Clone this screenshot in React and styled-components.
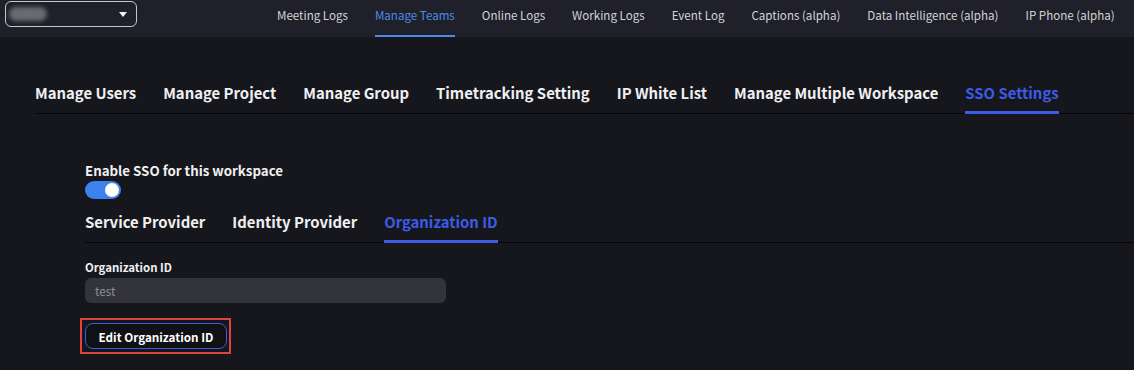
import styled, { createGlobalStyle } from 'styled-components'

const GlobalStyle = createGlobalStyle`
    body {
        margin: 0;
        background: #16171c;
        font-family: "Noto Sans CJK JP", "Noto Sans", sans-serif;
    }
`

const topLinks = [
    'Meeting Logs',
    'Manage Teams',
    'Online Logs',
    'Working Logs',
    'Event Log',
    'Captions (alpha)',
    'Data Intelligence (alpha)',
    'IP Phone (alpha)',
]

const mainTabs = [
    'Manage Users',
    'Manage Project',
    'Manage Group',
    'Timetracking Setting',
    'IP White List',
    'Manage Multiple Workspace',
    'SSO Settings',
]

const ssoTabs = ['Service Provider', 'Identity Provider', 'Organization ID']

const App = () => {
    return (
        <Page>
            <GlobalStyle />
            <Header>
                <WorkspaceSelect>
                    <Blur />
                    <Caret />
                </WorkspaceSelect>
                <TopNav>
                    {topLinks.map((link) => (
                        <TopLink key={link} $active={link === 'Manage Teams'}>
                            {link}
                        </TopLink>
                    ))}
                </TopNav>
            </Header>

            <Content>
                <TabBar>
                    {mainTabs.map((tab) => (
                        <Tab key={tab} $active={tab === 'SSO Settings'}>
                            {tab}
                        </Tab>
                    ))}
                </TabBar>

                <SsoPanel>
                    <FieldLabel $size="13.3px">Enable SSO for this workspace</FieldLabel>
                    <Toggle $on>
                        <Knob />
                    </Toggle>

                    <SubTabBar>
                        {ssoTabs.map((tab) => (
                            <Tab key={tab} $active={tab === 'Organization ID'}>
                                {tab}
                            </Tab>
                        ))}
                    </SubTabBar>

                    <FieldLabel $size="11.4px">Organization ID</FieldLabel>
                    <TextInput>test</TextInput>

                    <Highlight>
                        <OutlineButton>Edit Organization ID</OutlineButton>
                    </Highlight>
                </SsoPanel>
            </Content>
        </Page>
    )
}

export default App

const Page = styled.div`
    width: 1134px;
    height: 370px;
    overflow: hidden;
    background: #16171c;
    color: #e8e8ea;
`

const Header = styled.div`
    height: 37px;
    background: #1f2029;
    display: flex;
    align-items: flex-start;
    padding-left: 5px;
`

const WorkspaceSelect = styled.div`
    flex-shrink: 0;
    margin-top: 1px;
    width: 132px;
    height: 26px;
    border: 1.5px solid #c8c8cc;
    border-radius: 6px;
    display: flex;
    align-items: center;
    justify-content: space-between;
    padding: 0 9px 0 3px;
    box-sizing: border-box;
`

const Blur = styled.div`
    width: 38px;
    height: 14px;
    border-radius: 7px;
    background: #6a6b70;
    filter: blur(2px);
`

const Caret = styled.div`
    width: 0;
    height: 0;
    border-left: 4px solid transparent;
    border-right: 4px solid transparent;
    border-top: 5px solid #f2f2f2;
`

const TopNav = styled.nav`
    display: flex;
    margin-left: 140px;
    gap: 27px;
`

const TopLink = styled.div`
    font-size: 11.58px;
    height: 37px;
    line-height: 30px;
    box-sizing: border-box;
    color: ${(p) => (p.$active ? '#4a8ce8' : '#d4d4d8')};
    border-bottom: 2px solid ${(p) => (p.$active ? '#4a8ce8' : 'transparent')};
    white-space: nowrap;
`

const Content = styled.div`
    padding-top: 39px;
`

const TabBar = styled.div`
    margin-left: 35px;
    display: flex;
    gap: 27px;
    border-bottom: 1px solid #050506;
`

const Tab = styled.div`
    font-size: 14.88px;
    font-weight: 600;
    height: 38px;
    line-height: 34px;
    box-sizing: border-box;
    white-space: nowrap;
    color: ${(p) => (p.$active ? '#3d5be6' : '#f0f0f2')};
    border-bottom: 3px solid ${(p) => (p.$active ? '#3d5be6' : 'transparent')};
    margin-bottom: -1px;
`

const SsoPanel = styled.div`
    padding-left: 85px;
    padding-top: 48px;
    display: flex;
    flex-direction: column;
    align-items: flex-start;
`

const FieldLabel = styled.div`
    font-size: ${(p) => p.$size};
    font-weight: 600;
    line-height: 18px;
    color: #f0f0f2;
`

const Toggle = styled.div`
    margin-top: 1px;
    width: 36px;
    height: 18px;
    border-radius: 9px;
    background: ${(p) => (p.$on ? '#3b82f0' : '#555')};
    display: flex;
    align-items: center;
    justify-content: ${(p) => (p.$on ? 'flex-end' : 'flex-start')};
    padding: 0 2px;
    box-sizing: border-box;
`

const Knob = styled.div`
    width: 14px;
    height: 14px;
    border-radius: 50%;
    background: #ffffff;
`

const SubTabBar = styled.div`
    margin-top: 6px;
    align-self: stretch;
    display: flex;
    gap: 27px;
    border-bottom: 1px solid #050506;
    margin-bottom: 15px;
`

const TextInput = styled.div`
    margin-top: 2px;
    width: 361px;
    height: 25px;
    border-radius: 6px;
    background: #333439;
    color: #8c8c90;
    font-size: 11.8px;
    line-height: 25px;
    padding-left: 10px;
    box-sizing: border-box;
`

const Highlight = styled.div`
    margin-top: 15px;
    margin-left: -5px;
    border: 2.5px solid #e2433b;
    padding: 3px 2px 3px 2.5px;
`

const OutlineButton = styled.button`
    display: block;
    font-family: inherit;
    font-size: 11.7px;
    font-weight: 600;
    color: #ffffff;
    background: #101115;
    border: 1.5px solid #3d5be6;
    border-radius: 8px;
    height: 26px;
    padding: 0 13px;
    cursor: pointer;
`
